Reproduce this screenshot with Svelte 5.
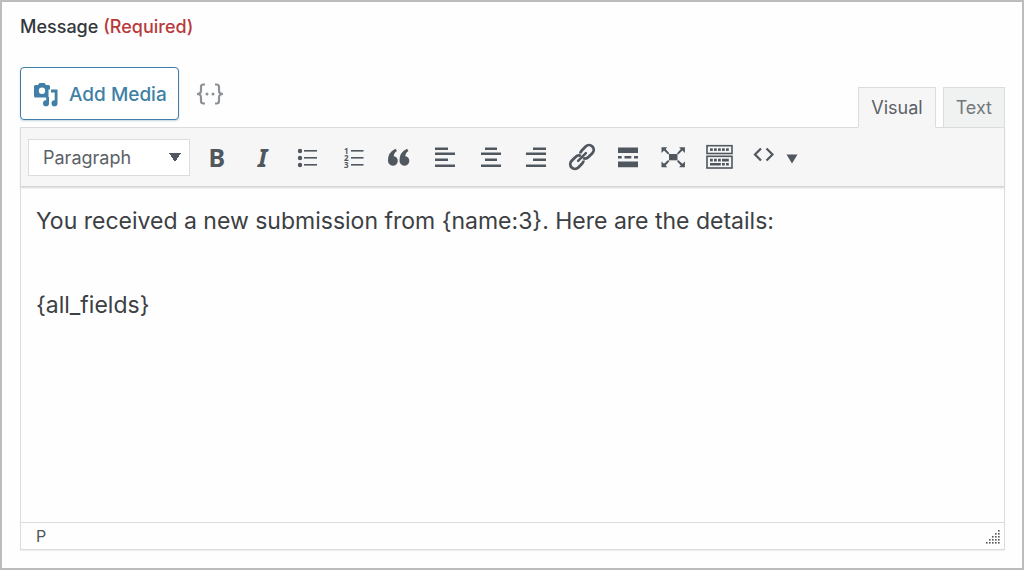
<script>
    let message = $state(
        'You received a new submission from {name:3}. Here are the details:\n\n{all_fields}'
    );
    let mode = $state('Visual');

    const modes = ['Visual', 'Text'];
    const rows = [7, 12, 18, 24];
    const aligns = [
        { label: 'Align left', short: 5 },
        { label: 'Align center', short: 9 },
        { label: 'Align right', short: 12 }
    ];
    const grip = [0, 1, 2, 3, 4];
</script>

<main class="field">
    <label class="title" for="message">Message <span class="required">(Required)</span></label>

    <div class="tools">
        <button type="button" class="add-media">
            <svg width="24" height="24" viewBox="0 0 24 24">
                <path
                    fill-rule="evenodd"
                    d="M1.500 2H4L5.500 0H10.500L12 2H14.500Q16 2 16 3.500V6.500H14.500V14.500H1.500Q0 14.500
                    0 13V3.500Q0 2 1.500 2ZM8 4.500A3.200 3.200 0 1 0 8 10.900A3.200 3.200 0 1 0 8 4.500Z" />
                <path
                    d="M17 6.500H23.500V20.200A3 3 0 1 1 20.700 17.300V9.500H17ZM15 14V20.200A3 3 0 1 1 12.200
                    17.300V14Z" />
            </svg>
            Add Media
        </button>
        <button type="button" class="merge-tags" aria-label="Insert merge tags">
            <svg width="28" height="22" viewBox="0 0 28 22">
                <g fill="none" stroke="currentColor" stroke-width="2.200">
                    <path d="M9 1.500H7.500Q5 1.500 5 4V7.500Q5 11 1 11Q5 11 5 14.500V18Q5 20.500 7.500 20.500H9" />
                    <path d="M19 1.500H20.500Q23 1.500 23 4V7.500Q23 11 27 11Q23 11 23 14.500V18Q23 20.500 20.500 20.500H19" />
                </g>
                <circle cx="11" cy="11" r="1.500" />
                <circle cx="17" cy="11" r="1.500" />
            </svg>
        </button>
        <div class="tabs">
            {#each modes as name}
                <button
                    type="button"
                    class="tab"
                    class:active={mode === name}
                    onclick={() => (mode = name)}>{name}</button>
            {/each}
        </div>
    </div>

    <div class="editor">
        <div class="toolbar">
            <select aria-label="Block format">
                <option>Paragraph</option>
                <option>Heading 1</option>
                <option>Heading 2</option>
                <option>Preformatted</option>
            </select>
            <div class="buttons">
                <button type="button" aria-label="Bold"><b>B</b></button>
                <button type="button" aria-label="Italic"><i>I</i></button>
                <button type="button" aria-label="Bulleted list">
                    <svg class="icon" viewBox="0 0 30 30">
                        {#each [9, 16, 23] as y}
                            <circle cx="7" cy={y} r="2.200" />
                            <rect x="11" y={y - 1} width="13" height="1.600" />
                        {/each}
                    </svg>
                </button>
                <button type="button" aria-label="Numbered list">
                    <svg class="icon" viewBox="0 0 30 30">
                        {#each [9, 16, 23] as y, i}
                            <text x="5" y={y + 3}>{i + 1}</text>
                            <rect x="12" y={y - 1} width="12.500" height="1.600" />
                        {/each}
                    </svg>
                </button>
                <button type="button" aria-label="Blockquote">
                    <svg class="icon" viewBox="0 0 30 30">
                        {#each [0, 11.5] as x}
                            <path
                                transform="translate({x} 0)"
                                d="M11.500 6.800L13 9Q9.800 11 9.800 14.300Q13.800 15 13.800 19A4.900 5 0 0 1 4
                                18.500Q3.800 10.500 11.500 6.800Z" />
                        {/each}
                    </svg>
                </button>
                {#each aligns as align}
                    <button type="button" aria-label={align.label}>
                        <svg class="icon" viewBox="0 0 30 30">
                            {#each rows as y, i}
                                <rect
                                    x={i % 2 ? 5 : align.short}
                                    y={y - 1.5}
                                    width={i % 2 ? 20 : align.short === 9 ? 12 : 13}
                                    height="2.500" />
                            {/each}
                        </svg>
                    </button>
                {/each}
                <button type="button" aria-label="Insert link">
                    <svg class="icon" viewBox="0 0 30 30">
                        <g fill="none" stroke="currentColor" stroke-width="2.800" transform="rotate(-45 15 15)">
                            <path d="M13.500 18.500Q12.500 19.800 10.500 19.800H5A4.600 4.600 0 0 1 5 10.400H10.500Q14 10.400 15 13.500" />
                            <path d="M16.500 11.500Q17.500 10.200 19.500 10.200H25A4.600 4.600 0 0 1 25 19.600H19.500Q16 19.600 15 16.500" />
                            <path d="M9.500 15H20.500" stroke-width="2.400" stroke-linecap="round" />
                        </g>
                    </svg>
                </button>
                <button type="button" aria-label="Read more">
                    <svg class="icon" viewBox="0 0 30 30">
                        <path
                            d="M5 5.500H25V11H5ZM5 14H8.700V16.500H5ZM11.500 14H18.300V16.500H11.500ZM21 14H25V16.500H21ZM5
                            19.500H25V25.300H5Z" />
                    </svg>
                </button>
                <button type="button" aria-label="Fullscreen">
                    <svg class="icon" viewBox="0 0 30 30">
                        <rect x="11" y="12" width="8.500" height="6.300" />
                        {#each [[1, 1], [-1, 1], [1, -1], [-1, -1]] as [sx, sy]}
                            <path
                                transform="translate(15.200 15.200) scale({sx} {sy})"
                                d="M-11.700 -10H-5.800L-7.600 -8.200L-3.800 -4L-5 -2.800L-9.200 -6.600L-11.700 -4.200Z" />
                        {/each}
                    </svg>
                </button>
                <button type="button" aria-label="Toolbar toggle">
                    <svg class="icon" viewBox="0 0 30 30">
                        <g fill="none" stroke="currentColor" stroke-width="1.600">
                            <rect x="3" y="3.700" width="25" height="7.800" />
                            <rect x="3" y="14.300" width="25" height="11.700" />
                        </g>
                        {#each [6, 10, 14, 18, 22] as x}
                            <rect {x} y="6.300" width="2.800" height="2.600" />
                        {/each}
                        <path
                            d="M6 16.800H8.800V19.400H6ZM10 16.800H12.800V19.400H10ZM14 16.800H16.800V19.400H14ZM18
                            16.800H24.800V19.400H18ZM6 21H16.800V23.600H6ZM18 21H20.800V23.600H18ZM22 21H24.800V23.600H22Z" />
                    </svg>
                </button>
            </div>
            <button type="button" class="source" aria-label="Source code">
                <svg width="46" height="22" viewBox="0 0 46 22">
                    <path
                        d="M9 2.500L3 8.500L9 14.500M14.500 2.500L20.500 8.500L14.500 14.500"
                        fill="none"
                        stroke="currentColor"
                        stroke-width="2.200" />
                    <path d="M34.500 8.500H45.500L40 17.500Z" />
                </svg>
            </button>
        </div>

        <textarea id="message" spellcheck="false" bind:value={message}></textarea>

        <div class="status">
            <span>P</span>
            <svg width="15" height="15" viewBox="0 0 15 15">
                {#each grip as row}
                    {#each grip.slice(0, row + 1) as col}
                        <rect x={13 - col * 3} y={row * 3 + 1} width="1.600" height="1.600" />
                    {/each}
                {/each}
            </svg>
        </div>
    </div>
</main>

<style>
    :global(body) {
        margin: 0;
        background: #fefefe;
        font-family: Inter, sans-serif;
        color: #32373c;
    }

    .field {
        display: flex;
        flex-direction: column;
        box-sizing: border-box;
        min-height: 100vh;
        border: 2px solid #bcbcbc;
        padding: 12px 17px 18px 18px;
    }

    button,
    select,
    textarea {
        font-family: inherit;
        margin: 0;
    }

    button {
        padding: 0;
        border: 0;
        background: none;
        color: #50575e;
        cursor: pointer;
    }

    svg {
        display: block;
        fill: currentColor;
    }

    .title {
        font-size: 18px;
        font-weight: 500;
        line-height: 25px;
    }

    .required {
        color: #b93a3a;
    }

    .tools {
        display: flex;
        align-items: flex-start;
        margin-top: 28px;
    }

    .add-media {
        display: flex;
        align-items: center;
        gap: 11px;
        box-sizing: border-box;
        height: 53px;
        padding: 2px 11px 0 13px;
        border: 1px solid #3f7ea8;
        border-radius: 4px;
        background: #fff;
        box-shadow: 0 1px 2px #c4d4de;
        color: #417fa6;
        font-size: 19px;
        font-weight: 500;
    }

    .merge-tags {
        margin: 16px 0 0 17px;
        color: #8b9197;
    }

    .tabs {
        display: flex;
        gap: 7px;
        margin: 20px 0 -1px auto;
    }

    .tab {
        position: relative;
        box-sizing: border-box;
        height: 41px;
        padding: 0 12px;
        border: 1px solid #dcdcde;
        background: #f0f1f1;
        color: #72777c;
        font-size: 18px;
    }

    .tab.active {
        border-bottom-color: #f6f6f6;
        background: #f6f6f6;
        color: #5b6167;
    }

    .editor {
        display: flex;
        flex: 1;
        flex-direction: column;
        border: 1px solid #dcdcde;
        box-shadow: 0 1px 1px #f0f0f0;
    }

    .toolbar {
        display: flex;
        align-items: center;
        height: 58px;
        padding-left: 7px;
        border-bottom: 1px solid #d5d5d7;
        background: #f6f6f6;
        box-shadow: 0 1px 2px #d5d5d7;
    }

    select {
        appearance: none;
        box-sizing: border-box;
        width: 162px;
        height: 37px;
        padding: 0 14px;
        border: 1px solid #dcdcde;
        border-radius: 0;
        background:
            linear-gradient(to top right, transparent 50%, #50575e 50%) no-repeat right 14px center / 6px 9px,
            linear-gradient(to top left, transparent 50%, #50575e 50%) no-repeat right 8px center / 6px 9px,
            #fff;
        color: #5b6167;
        font-size: 18px;
    }

    .buttons {
        display: grid;
        grid-template-columns: repeat(12, 1fr);
        width: 548px;
        margin-left: 4px;
    }

    .buttons button {
        display: flex;
        align-items: center;
        justify-content: center;
        height: 36px;
    }

    .buttons b,
    .buttons i {
        font: bold 25px/30px 'Noto Sans', sans-serif;
    }

    .buttons i {
        font-style: italic;
    }

    .icon {
        width: 30px;
        height: 30px;
    }

    .icon text {
        font: bold 8px 'Noto Sans', sans-serif;
    }

    .source {
        margin-left: 10px;
    }

    textarea {
        flex: 1;
        box-sizing: border-box;
        width: 100%;
        padding: 13px 15px;
        border: 0;
        outline: 0;
        background: transparent;
        resize: none;
        color: #3c4043;
        font-size: 23px;
        line-height: 42px;
    }

    .status {
        display: flex;
        align-items: center;
        justify-content: space-between;
        height: 26px;
        padding: 0 4px 0 15px;
        border-top: 1px solid #dcdcde;
        color: #555;
        font-size: 16px;
    }
</style>
